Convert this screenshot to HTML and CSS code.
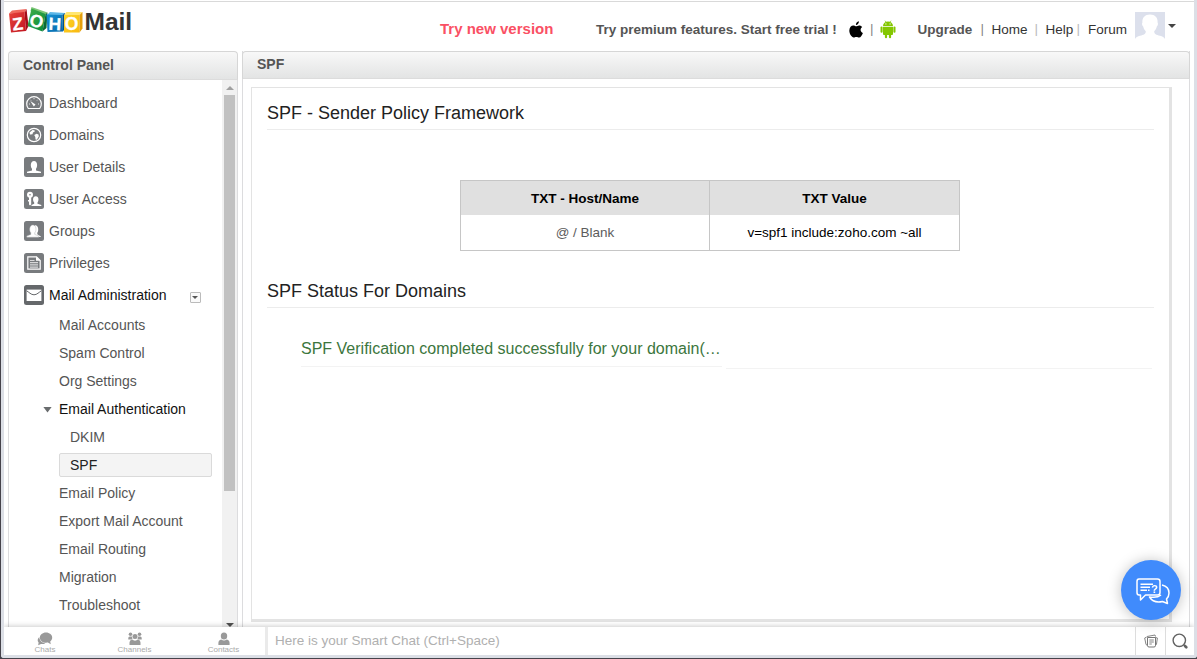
FILE: index.html
```html
<!DOCTYPE html>
<html lang="en">
<head>
<meta charset="utf-8">
<title>Zoho Mail - Control Panel</title>
<link rel="stylesheet" href="styles.css">
</head>
<body>
<div class="app">
  <header class="topbar">
    <svg class="logo" width="128" height="34" viewBox="0 0 128 34">
      <defs>
        <linearGradient id="lr" x1="0" y1="0" x2="1" y2="1"><stop offset="0" stop-color="#e8433c"/><stop offset="1" stop-color="#c01520"/></linearGradient>
        <linearGradient id="lg" x1="0" y1="0" x2="1" y2="1"><stop offset="0" stop-color="#3fae49"/><stop offset="1" stop-color="#078b3b"/></linearGradient>
        <linearGradient id="lb" x1="0" y1="0" x2="1" y2="1"><stop offset="0" stop-color="#1791d4"/><stop offset="1" stop-color="#0668aa"/></linearGradient>
        <linearGradient id="ly" x1="0" y1="0" x2="1" y2="1"><stop offset="0" stop-color="#fdd427"/><stop offset="1" stop-color="#f9b912"/></linearGradient>
      </defs>
      <path fill="#ef6a5f" d="M0 7.500 3 4.500 17.500 3 15.500 7z"/>
      <path fill="#a40e18" d="M15.500 7 17.500 3 19.500 20 17 25z"/>
      <path fill="url(#lr)" d="M0 7.500 15.500 6 17 25 2 26.500z"/>
      <path fill="#7cc576" d="M22.500 1 38.500 6.500 35.500 9 21.500 5z"/>
      <path fill="url(#lg)" d="M22.500 2.500 36.500 8 33.500 25.500 18.500 20z"/>
      <path fill="#0a6a34" d="M36.500 8 38.500 6.500 37.500 22 33.500 25.500z"/>
      <path fill="#5db7e8" d="M38 9 41 6 56 7 53 10z"/>
      <path fill="url(#lb)" d="M37.500 8.500 53.500 9 54 25.500 38.500 26z"/>
      <path fill="#064f88" d="M53.500 9 56 7 57 21 54 25.500z"/>
      <path fill="#ffe671" d="M55 9 57.500 6 73.500 6 70.500 9z"/>
      <path fill="url(#ly)" d="M55 9H70.500V26.500H55z"/>
      <path fill="#e5a00c" d="M70.500 9 73.500 6V22.500L70.500 26.500z"/>
      <g class="logo-tile">
        <text x="3.200" y="24" transform="rotate(-6 8.500 17)">Z</text>
        <text x="20.800" y="21" transform="rotate(14 27.500 15)">O</text>
        <text x="39.500" y="24" transform="rotate(3 46 17)">H</text>
        <text x="55.700" y="24">O</text>
      </g>
      <text class="logo-mail" x="75.500" y="24">Mail</text>
    </svg>
    <a class="try-new">Try new version</a>
    <a class="premium">Try premium features. Start free trial !</a>
    <svg class="apple" width="14" height="17" viewBox="0 0 14 17"><path d="M9.900.2C10.200 2 8.600 4 6.900 4 6.700 2.200 8.200.5 9.900.2zM10.100 4.400c1.300 0 2.500.7 3.100 1.600-2.400 1.600-2 4.800.7 5.900-.7 2-2.200 4.600-3.800 4.600-1 0-1.600-.6-2.700-.6-1.200 0-1.900.6-2.700.6C2.700 16.500.3 13 .3 9.600.3 6.300 2.300 4.500 4.300 4.500c1.300 0 2.200.8 3 .8.700 0 1.600-.9 2.800-.9z"/></svg>
    <i class="sep sep-os">|</i>
    <svg class="android" width="16" height="19" viewBox="0 0 16 19" fill="#84c700"><path d="M3 6a5 4.600 0 0 1 10 0zM3 6.700h10v7.400q0 .9-.9.900H3.900q-.9 0-.9-.9z"/><rect x=".5" y="6.500" width="2.100" height="6.300" rx="1"/><rect x="13.400" y="6.500" width="2.100" height="6.300" rx="1"/><rect x="4.900" y="13" width="2.200" height="5.300" rx="1.100"/><rect x="8.900" y="13" width="2.200" height="5.300" rx="1.100"/><path d="M5 .7l1.400 2M11 .7l-1.400 2" stroke="#84c700" stroke-width=".7"/><circle cx="5.900" cy="3.900" r=".6" fill="#fff"/><circle cx="10.100" cy="3.900" r=".6" fill="#fff"/></svg>
    <a class="upgrade">Upgrade</a>
    <i class="sep sep-a">|</i>
    <a class="home">Home</a>
    <i class="sep sep-b light">|</i>
    <a class="help">Help</a>
    <i class="sep sep-c light">|</i>
    <a class="forum">Forum</a>
    <svg class="avatar" width="30" height="28" viewBox="0 0 30 28"><path fill="#dce0ec" d="M0 0H30V28H0z"/><path fill="#fff" d="M15 2.500c5 0 8 3 7.600 8 .8 1.500.2 3-.8 4-.5 2-1.300 3.500-2.600 4.700 0 3 2 3.600 5.800 4.500 2.500.6 4 1.500 5 3.300v1H0v-1c1-1.800 2.500-2.700 5-3.300 3.800-.9 5.800-1.500 5.800-4.500-1.300-1.200-2.100-2.700-2.600-4.700-1-1-1.600-2.500-.8-4C7 5.500 10 2.500 15 2.500z"/></svg>
    <i class="caret"></i>
  </header>

  <div class="columns">
    <aside class="sidebar">
      <h2 class="panel-head">Control Panel</h2>
      <div class="side-body">
        <nav class="menu">
          <a class="item"><svg class="ico" viewBox="0 0 20 20"><rect width="20" height="20" rx="2.500"/><path class="ln" d="M4.300 15.500A7.300 7.300 0 1 1 15.700 15.500z"/><path class="ln thin" d="M5 11h1M6.300 6.800l.7.700M10 5v1.200M13.700 6.800l-.7.700M15 11h-1"/><path class="fl" d="M6.300 8l5.200 3.500-1.700 2z"/></svg>Dashboard</a>
          <a class="item"><svg class="ico" viewBox="0 0 20 20"><rect width="20" height="20" rx="2.500"/><circle class="ln" cx="10" cy="10" r="6.700"/><path class="fl" d="M5.500 7.500 8.500 5l2 .3.300 1.200-1.800 1-.5 1.800-1.700.2L6 9.500zM10.200 10l2.300-1.300 2 .8.300 2-2 3.200-1.300-.3-.2-2.400z"/></svg>Domains</a>
          <a class="item"><svg class="ico" viewBox="0 0 20 20"><rect width="20" height="20" rx="2.500"/><path class="fl" d="M3 16v-1.200l5-1.300v-1.800C6.200 10 6.200 4 10 4s3.800 6 2 7.700v1.800l5 1.300V16z"/></svg>User Details</a>
          <a class="item"><svg class="ico" viewBox="0 0 20 20"><rect width="20" height="20" rx="2.500"/><circle cx="6" cy="5.800" r="1.900" fill="none" stroke="#fff" stroke-width="2.200"/><path class="fl" d="M5 8h2.200v7.500L6 16.500l-1-1zM4 11h2v1.500H4zM7.500 17v-1l2.700-1.200v-1.300C8.500 12 8.500 7.300 11.800 7.300s3.200 4.700 1.700 6.200v1.300L17.300 16v1z"/></svg>User Access</a>
          <a class="item"><svg class="ico" viewBox="0 0 20 20"><rect width="20" height="20" rx="2.500"/><path class="fl" d="M11 4.200c3.800-.2 3.800 6 2.300 7.500v1.500l3.500 2.300V16H11z"/><path d="M2.800 16.200v-1.300l4-1.400v-1.800C5 10 5.200 3.900 8.900 3.900s3.600 6.100 2 7.800v1.800l3.900 1.400v1.300z" fill="#fff" stroke="#a5a7a9" stroke-width=".4"/></svg>Groups</a>
          <a class="item"><svg class="ico" viewBox="0 0 20 20"><rect width="20" height="20" rx="2.500"/><path class="ln" d="M3.800 3.800h8.700L16.200 7.500v8.700H3.800z"/><path class="fl" d="M12 3.500v4.200h4.200z"/><path class="ln" d="M6 7.500h4.500M6 9.700h8M6 11.900h8M6 14.100h8" opacity=".7"/></svg>Privileges</a>
          <a class="item active"><svg class="ico dark" viewBox="0 0 20 20"><rect width="20" height="20" rx="2.500"/><path class="fl" d="M2.600 4.600h14.800v11.400H2.600z"/><path d="M2.600 5.800c2.200 1.200 4.400 4 7.400 4s5.200-2.800 7.400-4" fill="none" stroke="#65686b" stroke-width="1"/></svg>Mail Administration<span class="drop"><i></i></span></a>
          <a class="sub">Mail Accounts</a>
          <a class="sub">Spam Control</a>
          <a class="sub">Org Settings</a>
          <a class="sub open"><i class="tri"></i>Email Authentication</a>
          <a class="sub deep">DKIM</a>
          <a class="sub deep selected">SPF</a>
          <a class="sub">Email Policy</a>
          <a class="sub">Export Mail Account</a>
          <a class="sub">Email Routing</a>
          <a class="sub">Migration</a>
          <a class="sub">Troubleshoot</a>
        </nav>
        <div class="scroll"><i class="up"></i><i class="thumb"></i><i class="down"></i></div>
      </div>
    </aside>

    <main class="main">
      <h2 class="panel-head main-head">SPF</h2>
      <section class="sheet">
        <h3>SPF - Sender Policy Framework</h3>
        <div class="table">
          <b>TXT - Host/Name</b><b>TXT Value</b>
          <span class="muted">@ / Blank</span><span>v=spf1 include:zoho.com ~all</span>
        </div>
        <h3>SPF Status For Domains</h3>
        <div class="status"><p>SPF Verification completed successfully for your domain(…</p><i></i></div>
      </section>
    </main>
  </div>

  <footer class="chatbar">
    <div class="tabs">
      <a><svg width="16" height="14" viewBox="0 0 16 14"><path d="M2.300 5C.2 6.800.3 9.200 1.600 10.500L1.200 13.200 4 11.900c1.500.4 3 .2 4.300-.5C4.800 10.800 2.300 8.300 2.300 5z"/><path d="M9 .6c3.500 0 6.200 2.300 6.200 5.100 0 1.500-.8 2.800-2 3.700l.6 2.800-2.900-1.600c-4.600.8-8-1.600-8-4.900C2.900 2.900 5.500.6 9 .6z"/></svg>Chats</a>
      <a><svg width="14" height="14" viewBox="0 0 14 14"><circle cx="2.500" cy="2.300" r="1.800"/><circle cx="11.500" cy="2.300" r="1.800"/><circle cx="7" cy="4.600" r="2.500"/><path d="M.3 7.500V6q0-1.500 1.500-1.500h2L4.600 7.500zM13.700 7.500V6q0-1.500-1.500-1.500h-2L9.400 7.500zM1.500 12.900v-2.500q0-2.400 2.500-2.600l3 1 3-1q2.500.2 2.500 2.600v2.500z"/></svg>Channels</a>
      <a><svg width="12" height="14" viewBox="0 0 12 14"><ellipse cx="6" cy="4" rx="3.200" ry="3.600"/><path d="M.4 13v-2q0-2.800 2.800-3.400 2.800 1.900 5.600 0 2.800.6 2.800 3.400v2z"/></svg>Contacts</a>
    </div>
    <div class="smart">Here is your Smart Chat (Ctrl+Space)</div>
    <div class="tool"><svg width="14" height="14" viewBox="0 0 14 14" fill="none" stroke="#777"><path d="M3.500 3.500h8v8q0 1.500-1.500 1.500H5q-1.500 0-1.500-1.500z"/><path d="M5.300 6h4.500M5.300 8h4.500M5.300 10h2.500" stroke-width=".9"/><path d="M3.500 11.500 2 10.500.7 4l2-1M3 2.500l8-1.500.5 1.500M11.500 3.500l1.900.5L12.500 10l-1 1.500" stroke-width=".9"/></svg></div>
    <div class="tool last"><svg width="17" height="17" viewBox="0 0 17 17" fill="none" stroke="#626262"><circle cx="7.300" cy="7.300" r="6.200" stroke-width="1.400"/><path d="M11.700 11.700l1 1" stroke-width="1.200"/><path d="M13 13l1.300 1.300" stroke-width="2.700" stroke-linecap="round"/></svg></div>
  </footer>
</div>
<div class="bubble"><svg width="36" height="30" viewBox="0 0 36 30" fill="none" stroke="#fff" stroke-width="1.500" stroke-linejoin="round"><path d="M4 2H22.500Q25 2 25 4.500V15.500Q25 18 22.500 18H10.500L5.500 23V18H4Q2 18 2 15.500V4.500Q2 2 4 2z"/><path d="M27 8c4.500 1 7 4 7 8 0 2.500-1 4.500-2.500 6l1 4.500-5-2c-5.500 1.300-10.500-.5-13-4.500 5 .8 8.800.3 11.500-2"/><path d="M5.500 7.200h12.500M5.500 10.200h9.500M5.500 13.200h6.500M13 13.200h1.500" stroke-width="1.400"/><text x="16.300" y="15.500">?</text></svg></div>
</body>
</html>
```

FILE: styles.css
```css
* { box-sizing: border-box; }
html { background: #45434b; }
body { margin: 0; font-family: "Liberation Sans", Arial, sans-serif; color: #555; overflow: hidden; }
h2, h3, p { margin: 0; }
i { font-style: normal; }
.app {
  width: 1196px; height: 658px; margin-left: 1px; display: flex; flex-direction: column;
  background: #fff; border: solid #dcdfe6; border-width: 0 3px 3px 3px; border-radius: 0 0 3px 3px;
}

.topbar { height: 51px; display: flex; align-items: flex-start; border-top: 1px solid #fff; position: relative; font-size: 13.500px; line-height: 16px; color: #333; white-space: nowrap; flex: none; }
.topbar::before { content: ""; position: absolute; left: 0; right: 0; top: 0; height: 1px; background: #d9d9d9; }
.logo { margin: 5px 0 0 5px; flex: none; }
.logo-tile text { font: bold 17.500px "Liberation Sans", Arial, sans-serif; fill: #fff; stroke: #fff; stroke-width: .3; }
.logo-mail { font: bold 24.500px "Liberation Sans", Arial, sans-serif; fill: #333; }
.try-new { width: 156px; margin: 20px 0 0 303px; font-size: 15px; font-weight: bold; color: #fa5064; }
.premium { width: 253px; margin-top: 21px; font-weight: bold; color: #555; }
.apple { margin-top: 20px; flex: none; }
.sep { margin-top: 20px; color: #888; }
.light { color: #bbb; }
.sep-os { width: 10px; margin-left: 7px; }
.android { margin-top: 19px; flex: none; }
.upgrade { width: 63px; margin: 21px 0 0 21.500px; font-weight: bold; color: #555; }
.sep-a { width: 11px; }
.home { width: 43px; margin-top: 21px; }
.sep-b { width: 11px; }
.help { width: 31px; margin-top: 21px; }
.sep-c { width: 11.500px; }
.forum { width: 47px; margin-top: 21px; }
.avatar { margin-top: 11px; flex: none; }
.caret { margin: 23px 0 0 3px; border: solid transparent; border-width: 4px 4px 0; border-top-color: #444; }

.columns { display: flex; gap: 4px; height: 576px; padding: 0 4px; flex: none; overflow: hidden; }
.panel-head {
  height: 29px; border: 1px solid #d6d6d6; border-bottom-color: #dcdcdc; border-radius: 4px 4px 0 0;
  background: linear-gradient(#f8f8f8, #e3e4e4); padding-left: 14px;
  font-size: 14px; line-height: 26px; font-weight: bold; color: #555;
}
.sidebar { width: 230px; display: flex; flex-direction: column; flex: none; }
.side-body { flex: 1; display: flex; border: solid #dcdcde; border-width: 0 1px; min-height: 0; }
.menu { flex: 1; padding-top: 7px; font-size: 14px; }
.item { display: flex; align-items: center; height: 32px; padding-left: 15px; gap: 5px; }
.ico { width: 20px; height: 20px; fill: #787b7e; }
.dark { fill: #65686b; }
.ico .ln { fill: none; stroke: #fff; stroke-width: 1.200; }
.ico .thin { stroke-width: .8; }
.ico .fl { fill: #fff; }
.active { color: #111; }
.drop { width: 11px; height: 11px; margin: 4px 0 0 18px; border: 1px solid #bbb; border-radius: 1px; display: flex; align-items: center; justify-content: center; background: #fafafa; }
.drop i { border: solid transparent; border-width: 3px 3px 0; border-top-color: #555; }
.sub { display: flex; align-items: center; height: 28px; padding-left: 50px; }
.open { padding-left: 34px; color: #111; }
.tri { width: 9px; height: 6px; background: #696c6e; clip-path: polygon(0 0, 100% 0, 50% 100%); margin: 1px 7px 0 0; }
.deep { padding-left: 61px; }
.selected { height: 24px; margin: 2px 10px 2px 50px; padding-left: 10px; background: #f4f4f4; border: 1px solid #dadada; border-radius: 2px; color: #222; }
.scroll { width: 15px; background: #f1f1f1; display: flex; flex-direction: column; align-items: center; }
.up { border: solid transparent; border-width: 0 4px 4px; border-bottom-color: #a0a0a0; margin-top: 6px; }
.thumb { width: 11px; height: 396px; margin-top: 5px; background: #c1c1c1; }
.down { margin-top: 132px; border: solid transparent; border-width: 4px 4px 0; border-top-color: #505050; }

.main { width: 948px; display: flex; flex-direction: column; border: solid #dcdcde; border-width: 0 1px; }
.main-head { height: 28px; line-height: 25px; margin: 0 -1px; padding-left: 14px; flex: none; }
.sheet { width: 921px; height: 535px; margin: 8px 0 0 8px; border: solid #e3e3e3; border-width: 1px 3px 3px 1px; padding: 14px 15px 0; flex: none; }
.sheet h3 { height: 28px; border-bottom: 1px solid #ececec; font-size: 18px; line-height: 22px; font-weight: normal; color: #222; }
.table { width: 500px; height: 71px; margin: 50px auto 29px 193px; display: grid; grid-template: 34px 35px / 249px 249px; border: 1px solid #c6c6c6; font-size: 13.500px; text-align: center; line-height: 35px; color: #000; }
.table > :nth-child(odd) { border-right: 1px solid #c6c6c6; }
.table b { background: #e0e0e0; }
.table .muted { color: #5c5c5c; }
.status { display: flex; margin: 29px 2px 0 34px; align-items: flex-start; }
.status p { width: 421px; flex: none; height: 30px; font-size: 16px; line-height: 24px; color: #3c763d; border-bottom: 1px solid #f3f3f3; white-space: nowrap; }
.status i { flex: 1; height: 32px; margin-left: 4px; border-bottom: 1px solid #f3f3f3; }

.chatbar { height: 28px; display: flex; background: #fff; box-shadow: 0 -1px 5px rgba(0,0,0,.2); position: relative; flex: none; clip-path: inset(-8px 0 0 0); }
.tabs { width: 261px; display: flex; }
.tabs a { width: 90px; display: flex; flex-direction: column; align-items: center; font-size: 8px; line-height: 8px; color: #aaa; padding-top: 5px; }
.tabs a:first-child { width: 82px; }
.tabs a:nth-child(2) { width: 97px; }
.tabs a:nth-child(3) { width: 81px; }
.tabs svg { fill: #999; flex: none; }
.smart { flex: 1; border-left: 3px solid #eaeaea; padding-left: 7px; font-size: 13.500px; line-height: 27px; color: #b0b0b0; }
.tool { width: 30px; border-left: 1px solid #ddd; display: flex; align-items: center; justify-content: center; }
.last { width: 29px; }
.bubble { position: fixed; left: 1121px; top: 560px; width: 60px; height: 60px; border-radius: 50%; background: #408bfc; box-shadow: 0 1px 14px rgba(0,0,0,.25); display: flex; align-items: center; justify-content: center; }
.bubble svg { margin: 4px 0 0 3px; }
.bubble text { font: bold 11px "Liberation Sans", Arial, sans-serif; fill: #fff; stroke: none; }
```
